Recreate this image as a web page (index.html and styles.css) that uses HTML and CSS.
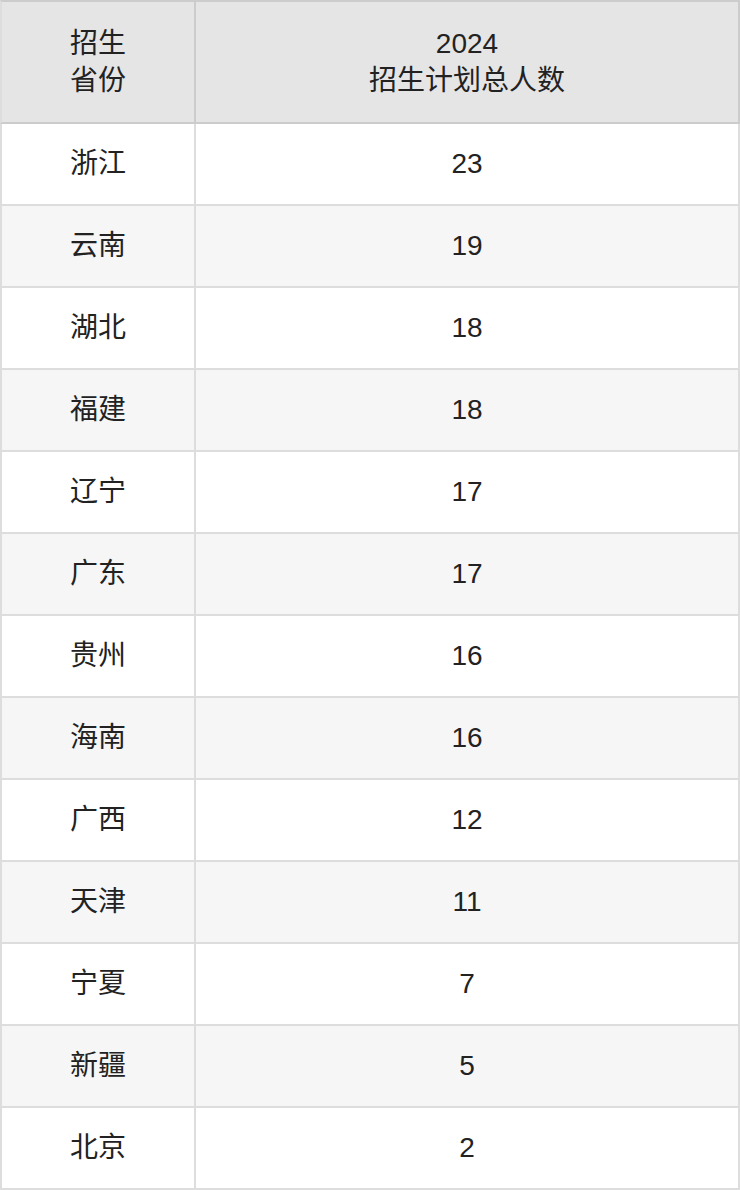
FILE: index.html
```html
<!DOCTYPE html>
<html lang="zh-CN">
<head>
<meta charset="utf-8">
<title>招生计划</title>
<link rel="stylesheet" href="styles.css">
</head>
<body>
<table class="plan">
  <colgroup><col class="c1"><col class="c2"></colgroup>
  <thead>
    <tr><th>招生<br>省份</th><th>2024<br>招生计划总人数</th></tr>
  </thead>
  <tbody>
    <tr><td>浙江</td><td>23</td></tr>
    <tr><td>云南</td><td>19</td></tr>
    <tr><td>湖北</td><td>18</td></tr>
    <tr><td>福建</td><td>18</td></tr>
    <tr><td>辽宁</td><td>17</td></tr>
    <tr><td>广东</td><td>17</td></tr>
    <tr><td>贵州</td><td>16</td></tr>
    <tr><td>海南</td><td>16</td></tr>
    <tr><td>广西</td><td>12</td></tr>
    <tr><td>天津</td><td>11</td></tr>
    <tr><td>宁夏</td><td>7</td></tr>
    <tr><td>新疆</td><td>5</td></tr>
    <tr><td>北京</td><td>2</td></tr>
  </tbody>
</table>
</body>
</html>
```
FILE: styles.css
```css
html, body {
  margin: 0;
  padding: 0;
  background: #ffffff;
}
.plan {
  width: 740px;
  border-collapse: separate;
  border-spacing: 0;
  table-layout: fixed;
  font-family: "Liberation Sans", "Noto Sans CJK SC", sans-serif;
  font-size: 28px;
  color: #222222;
}
.plan .c1 { width: 196px; }
.plan .c2 { width: 544px; }
.plan th,
.plan td {
  box-sizing: border-box;
  padding: 0;
  text-align: center;
  vertical-align: middle;
  font-weight: normal;
  border-right: 2px solid #dddddd;
  border-bottom: 2px solid #dddddd;
}
.plan th:first-child,
.plan td:first-child {
  border-left: 2px solid #dddddd;
}
.plan th {
  height: 124px;
  line-height: 37px;
  background: #e5e5e5;
  border-color: #cccccc;
  border-top: 2px solid #cccccc;
}
.plan td {
  height: 82px;
  line-height: 32px;
}
.plan tbody tr:nth-child(even) td {
  background: #f6f6f6;
}
```
